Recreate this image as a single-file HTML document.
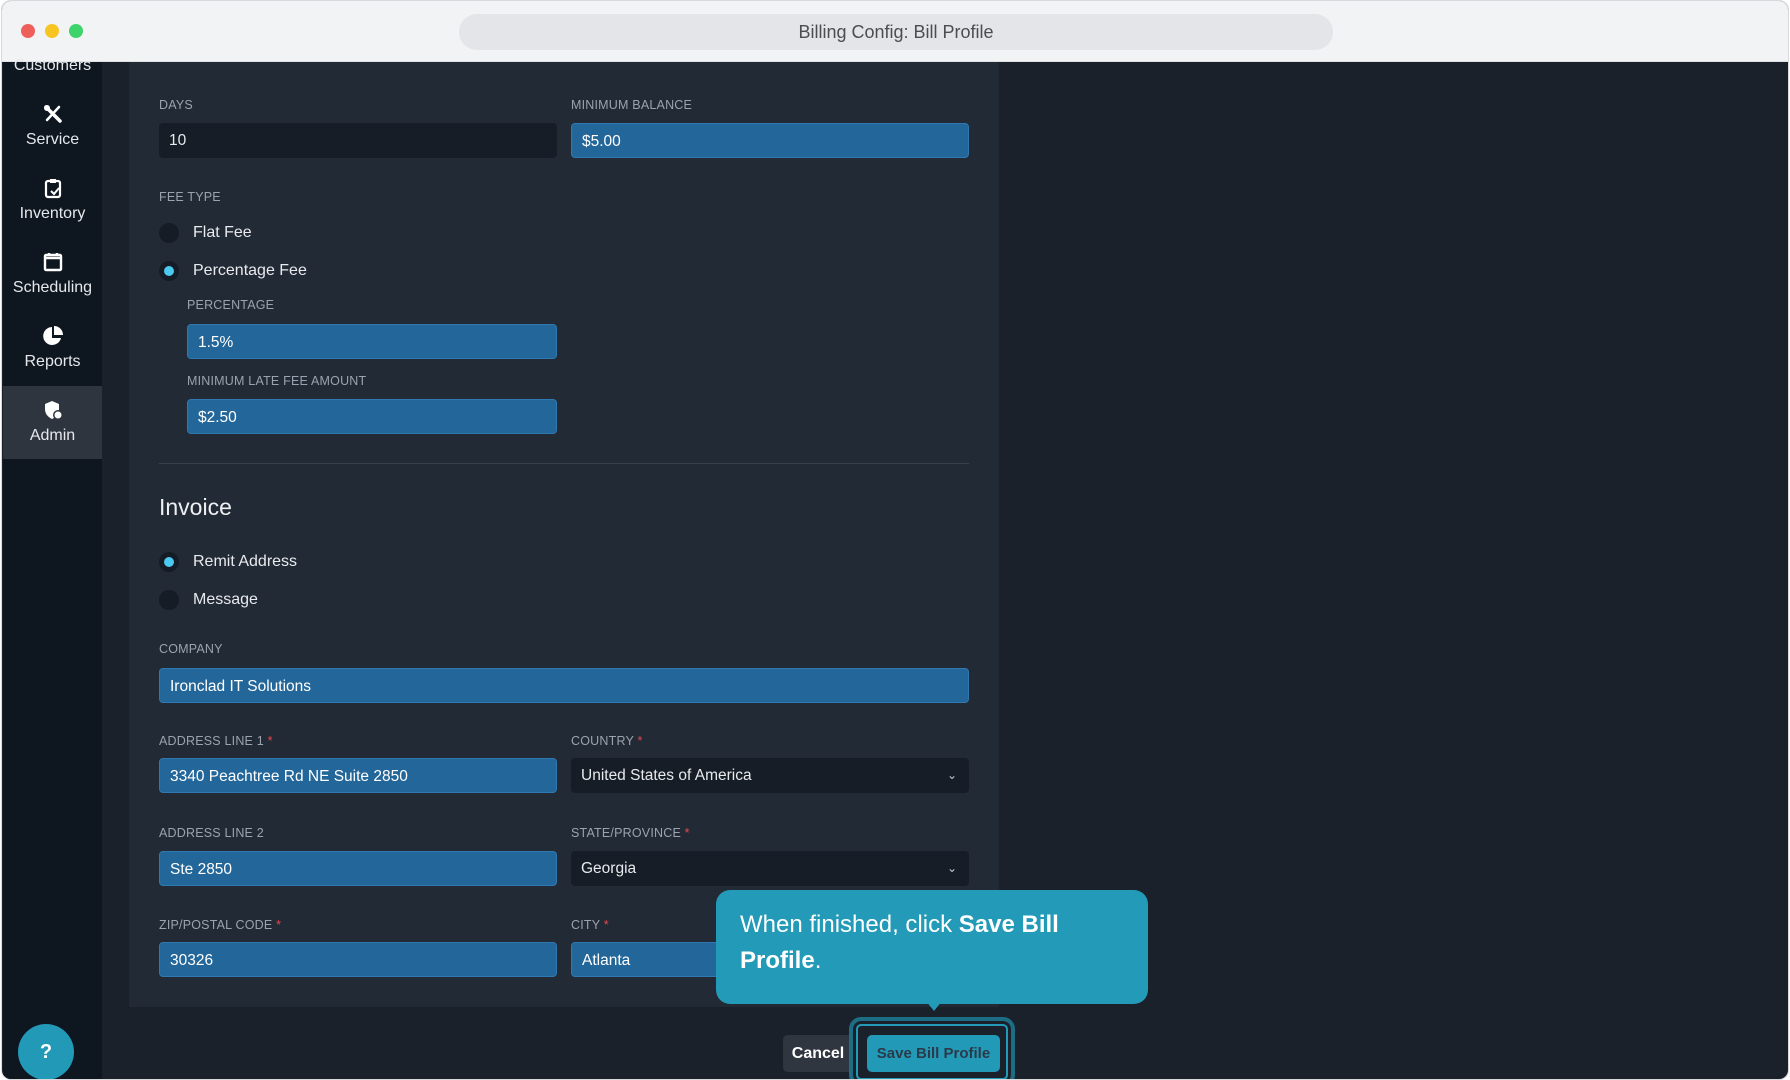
<!DOCTYPE html>
<html><head><meta charset="utf-8"><style>
*{box-sizing:border-box;margin:0;padding:0}
body{width:1790px;height:1080px;background:#fff;font-family:"Liberation Sans",sans-serif;position:relative;overflow:hidden}
.win{position:absolute;left:1px;top:0;width:1788px;height:1080px;border:1px solid #d8d9dc;border-radius:10px;overflow:hidden;background:#1a212b}
.tb{position:absolute;left:0;top:0;right:0;height:61px;background:#f2f3f5;border-bottom:1px solid #e0e1e4}
.dot{position:absolute;top:23px;width:14px;height:14px;border-radius:50%}
.pill{position:absolute;left:457px;top:13px;width:874px;height:36px;border-radius:18px;background:#e4e5e8;text-align:center;line-height:36px;font-size:18px;color:#4a4d52}
.side{position:absolute;left:1px;top:61px;width:99px;bottom:0;background:#0e1620}
.it{position:absolute;left:0;width:99px;text-align:center;color:#e6e8eb;font-size:16px}
.it svg{display:block;margin:0 auto 6px}
.card{position:absolute;left:127px;top:61px;width:870px;height:945px;background:#222a35}
.lab{position:absolute;font-size:12.5px;color:#9aa3ae;letter-spacing:.2px}
.lab b{color:#e5484d;font-weight:normal}
.in{position:absolute;height:35px;border-radius:4px;font-size:15.5px;color:#fff;line-height:35px;padding-left:10px}
.bl{background:#236699;border:1px solid #2f78b0}
.dk{background:#161d26;color:#e8eaed}
.rad{position:absolute;width:20px;height:20px;border-radius:50%;background:#151c25}
.rad.on::after{content:"";position:absolute;left:5px;top:5px;width:10px;height:10px;border-radius:50%;background:#4cc9f0}
.rt{position:absolute;font-size:16px;color:#e8eaed}
.chev{position:absolute;right:12px;top:0;color:#c9ccd1;font-size:12px}
</style></head><body>
<div class="win">
<div class="tb">
<div class="dot" style="left:19px;background:#ee5f5b"></div>
<div class="dot" style="left:43px;background:#f8c422"></div>
<div class="dot" style="left:67px;background:#3fd36b"></div>
<div class="pill">Billing Config: Bill Profile</div>
</div>
<div class="side">
<div class="it" style="top:-5px">Customers</div>
<div class="it" style="top:41px"><svg width="22" height="22" viewBox="0 0 22 22"><path d="M4 4l14 14" stroke="#fff" stroke-width="3.5" stroke-linecap="round"/><path d="M17 4L5 17" stroke="#fff" stroke-width="2.5" stroke-linecap="round"/><circle cx="5" cy="5" r="3" fill="#fff"/></svg>Service</div>
<div class="it" style="top:115px"><svg width="22" height="22" viewBox="0 0 22 22"><rect x="4" y="4" width="14" height="16" rx="2" fill="none" stroke="#fff" stroke-width="2.2"/><rect x="8" y="2" width="6" height="4" fill="#fff"/><path d="M9 14l3 3 5-6" stroke="#fff" stroke-width="2" fill="none"/></svg>Inventory</div>
<div class="it" style="top:189px"><svg width="22" height="22" viewBox="0 0 22 22"><rect x="3" y="4" width="16" height="15" rx="1" fill="none" stroke="#fff" stroke-width="2.4"/><path d="M3 7h16M7 2v3M15 2v3" stroke="#fff" stroke-width="2.4"/></svg>Scheduling</div>
<div class="it" style="top:263px"><svg width="22" height="22" viewBox="0 0 22 22"><path d="M10 2a9 9 0 1 0 9 11h-9z" fill="#fff"/><path d="M12 1v9h9a9 9 0 0 0-9-9z" fill="#fff"/></svg>Reports</div>
<div style="position:absolute;left:0;top:324px;width:99px;height:73px;background:#2e353f"></div>
<div class="it" style="top:337px"><svg width="22" height="22" viewBox="0 0 22 22"><path d="M10 2l7 3v5c0 5-3 8-7 10-4-2-7-5-7-10V5z" fill="#fff"/><circle cx="16" cy="16" r="5" fill="#2e353f"/><circle cx="16" cy="16" r="3.5" fill="#fff"/></svg>Admin</div>
<div style="position:absolute;left:15px;top:962px;width:56px;height:56px;border-radius:50%;background:#2399b8;color:#fff;font-weight:bold;font-size:20px;text-align:center;line-height:56px">?</div>
</div>
<div class="card">
<div class="lab" style="left:30px;top:36px">DAYS</div>
<div class="in dk" style="left:30px;top:61px;width:398px">10</div>
<div class="lab" style="left:442px;top:36px">MINIMUM BALANCE</div>
<div class="in bl" style="left:442px;top:61px;width:398px">$5.00</div>
<div class="lab" style="left:30px;top:128px">FEE TYPE</div>
<div class="rad" style="left:30px;top:161px"></div><div class="rt" style="left:64px;top:162px">Flat Fee</div>
<div class="rad on" style="left:30px;top:199px"></div><div class="rt" style="left:64px;top:200px">Percentage Fee</div>
<div class="lab" style="left:58px;top:236px">PERCENTAGE</div>
<div class="in bl" style="left:58px;top:262px;width:370px">1.5%</div>
<div class="lab" style="left:58px;top:312px">MINIMUM LATE FEE AMOUNT</div>
<div class="in bl" style="left:58px;top:337px;width:370px">$2.50</div>
<div style="position:absolute;left:30px;top:401px;width:810px;height:1px;background:#39414c"></div>
<div style="position:absolute;left:30px;top:432px;font-size:23px;color:#eef0f2">Invoice</div>
<div class="rad on" style="left:30px;top:490px"></div><div class="rt" style="left:64px;top:491px">Remit Address</div>
<div class="rad" style="left:30px;top:528px"></div><div class="rt" style="left:64px;top:529px">Message</div>
<div class="lab" style="left:30px;top:580px">COMPANY</div>
<div class="in bl" style="left:30px;top:606px;width:810px">Ironclad IT Solutions</div>
<div class="lab" style="left:30px;top:672px">ADDRESS LINE 1 <b>*</b></div>
<div class="in bl" style="left:30px;top:696px;width:398px">3340 Peachtree Rd NE Suite 2850</div>
<div class="lab" style="left:442px;top:672px">COUNTRY <b>*</b></div>
<div class="in dk" style="left:442px;top:696px;width:398px">United States of America<span class="chev">&#8964;</span></div>
<div class="lab" style="left:30px;top:764px">ADDRESS LINE 2</div>
<div class="in bl" style="left:30px;top:789px;width:398px">Ste 2850</div>
<div class="lab" style="left:442px;top:764px">STATE/PROVINCE <b>*</b></div>
<div class="in dk" style="left:442px;top:789px;width:398px">Georgia<span class="chev">&#8964;</span></div>
<div class="lab" style="left:30px;top:856px">ZIP/POSTAL CODE <b>*</b></div>
<div class="in bl" style="left:30px;top:880px;width:398px">30326</div>
<div class="lab" style="left:442px;top:856px">CITY <b>*</b></div>
<div class="in bl" style="left:442px;top:880px;width:398px">Atlanta</div>
</div>
<div style="position:absolute;left:781px;top:1034px;width:70px;height:37px;border-radius:5px;background:#30363f;color:#fff;font-weight:bold;font-size:16px;text-align:center;line-height:37px">Cancel</div>
<div style="position:absolute;left:847px;top:1016px;width:166px;height:70px;border-radius:12px;border:4px solid #1d6e85;box-shadow:inset 0 0 0 3px #1a212b,inset 0 0 0 5px #2399b8"></div>
<div style="position:absolute;left:865px;top:1034px;width:133px;height:37px;border-radius:5px;background:#2399b8;color:#2a3a48;font-weight:bold;font-size:15px;text-align:center;line-height:37px">Save Bill Profile</div>
<div style="position:absolute;left:714px;top:889px;width:432px;height:114px;border-radius:14px;background:#239ab7;color:#fff;font-size:24px;line-height:36px;padding:17px 24px">When finished, click <b>Save Bill Profile</b>.</div>
<div style="position:absolute;left:924px;top:1000px;width:0;height:0;border-left:8px solid transparent;border-right:8px solid transparent;border-top:10px solid #239ab7"></div>
</div>
</body></html>
